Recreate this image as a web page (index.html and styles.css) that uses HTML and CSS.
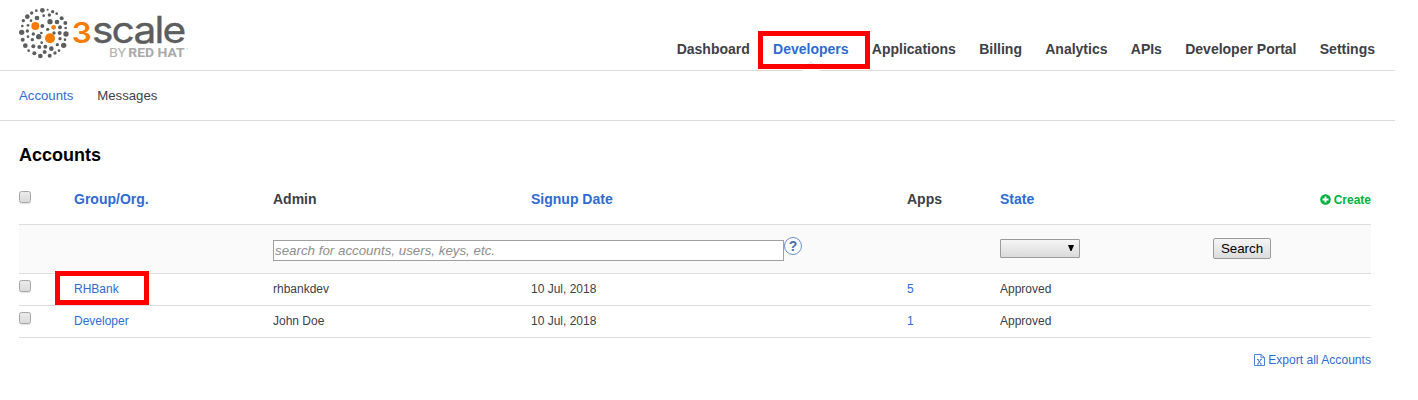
FILE: index.html
```html
<!DOCTYPE html>
<html lang="en">
<head>
<meta charset="utf-8">
<title>Accounts</title>
<link rel="stylesheet" href="styles.css">
</head>
<body>
<div class="page">
  <header class="header">
    <svg class="logo" viewBox="27 21 510 156" role="img" aria-label="3scale by Red Hat">
      <g class="dots" transform="translate(12 12)">
        <circle cx="85" cy="19" r="7"/><circle cx="67" cy="20" r="4"/><circle cx="101" cy="17" r="3"/><circle cx="116" cy="23" r="5"/><circle cx="128" cy="29" r="4"/><circle cx="53" cy="27" r="5"/><circle cx="40" cy="38" r="7"/><circle cx="69" cy="42" r="7"/><circle cx="89" cy="35" r="4"/><circle cx="106" cy="33" r="5"/><circle cx="143" cy="43" r="6"/><circle cx="108" cy="53" r="8"/><circle cx="129" cy="54" r="7"/><circle cx="154" cy="57" r="6"/><circle cx="51" cy="50" r="4"/><circle cx="28" cy="50" r="5"/><circle cx="85" cy="66" r="6"/><circle cx="42" cy="64" r="4"/><circle cx="25" cy="66" r="4"/><circle cx="101" cy="76" r="5"/><circle cx="138" cy="70" r="6"/><circle cx="155" cy="72" r="4"/><circle cx="23" cy="85" r="8"/><circle cx="40" cy="81" r="5"/><circle cx="58" cy="90" r="5"/><circle cx="82" cy="87" r="4"/><circle cx="120" cy="87" r="5"/><circle cx="137" cy="87" r="6"/><circle cx="156" cy="90" r="8"/><circle cx="42" cy="98" r="4"/><circle cx="74" cy="98" r="8"/><circle cx="55" cy="107" r="5"/><circle cx="26" cy="107" r="6"/><circle cx="138" cy="104" r="5"/><circle cx="153" cy="107" r="4"/><circle cx="34" cy="125" r="7"/><circle cx="83" cy="116" r="4"/><circle cx="58" cy="127" r="6"/><circle cx="76" cy="129" r="6"/><circle cx="94" cy="128" r="6"/><circle cx="130" cy="122" r="5"/><circle cx="149" cy="124" r="8"/><circle cx="112" cy="134" r="7"/><circle cx="44" cy="140" r="4"/><circle cx="61" cy="148" r="6"/><circle cx="92" cy="144" r="6"/><circle cx="123" cy="147" r="5"/><circle cx="135" cy="140" r="4"/><circle cx="79" cy="156" r="7"/><circle cx="107" cy="155" r="6"/>
        <g class="orange"><circle cx="64" cy="66" r="12"/><circle cx="119" cy="70" r="7"/><circle cx="108" cy="103" r="15"/></g>
      </g>
      <text class="orange three" x="185" y="129" textLength="60" lengthAdjust="spacingAndGlyphs">3</text>
      <text class="scale" transform="translate(246 128) scale(1.11 1)">scale</text>
      <text class="by" x="297" y="172" textLength="51" lengthAdjust="spacingAndGlyphs">BY</text>
      <text class="by strong" x="355" y="172" textLength="169" lengthAdjust="spacingAndGlyphs">RED HAT</text>
      <circle class="mark" cx="531" cy="147" r="2"/>
    </svg>
    <nav class="nav">
      <a>Dashboard</a>
      <a class="active">Developers<svg class="notch" viewBox="0 0 18 10"><path class="notch-fill" d="M0 10V9L9 1l9 8v1z"/><path class="notch-line" d="M.5 8.800L9 1l8.500 7.800"/></svg><span class="highlight highlight-nav"></span></a>
      <a>Applications</a>
      <a>Billing</a>
      <a>Analytics</a>
      <a>APIs</a>
      <a>Developer Portal</a>
      <a>Settings</a>
    </nav>
  </header>
  <nav class="subnav"><a class="link">Accounts</a><a>Messages</a></nav>
  <main class="main">
    <h1>Accounts</h1>
    <div class="table">
      <div class="row head">
        <span class="check"></span>
        <span class="link">Group/Org.</span>
        <span>Admin</span>
        <span class="link">Signup Date</span>
        <span>Apps</span>
        <span class="link">State</span>
        <a class="create"><svg viewBox="0 0 11 11"><circle cx="5.500" cy="5.500" r="5.300" fill="#00b140"/><path d="M5.500 2.500v6M2.500 5.500h6" stroke="#fff" stroke-width="1.900"/></svg>Create</a>
      </div>
      <div class="row filter">
        <div class="search"><input class="query" type="text" placeholder="search for accounts, users, keys, etc."><span class="help">?</span></div>
        <div class="select"><svg viewBox="0 0 6 6"><path d="M0 0h6L3.500 6h-1z"/></svg></div>
        <button class="button">Search</button>
      </div>
      <div class="row item">
        <span class="check"></span>
        <span class="link org">RHBank<span class="highlight highlight-org"></span></span>
        <span>rhbankdev</span>
        <span>10 Jul, 2018</span>
        <span class="link">5</span>
        <span>Approved</span>
      </div>
      <div class="row item">
        <span class="check"></span>
        <span class="link org">Developer</span>
        <span>John Doe</span>
        <span>10 Jul, 2018</span>
        <span class="link">1</span>
        <span>Approved</span>
      </div>
    </div>
    <a class="export link"><svg viewBox="0 0 11 12"><path d="M.5.500h6.500l3.500 3v8H.5zM7 .500v3.200h3.200" fill="none" stroke="#4c82d6"/><path d="M3.700 5.500l3.400 4.500M7.100 5.500l-3.400 4.500M3 5.500h1.700M6.200 5.500h1.600M3 10h1.700M6.200 10h1.600" fill="none" stroke="#2e6bd0" stroke-width=".9"/></svg>Export all Accounts</a>
  </main>
</div>
</body>
</html>
```

FILE: styles.css
```css
* { box-sizing: border-box; }
body {
  margin: 0;
  background: #fff;
  color: #3e4047;
  font: 12px/16px "Liberation Sans", Arial, sans-serif;
}
.page { width: 1395px; height: 400px; }
.link { color: #2e6bd3; }

.header {
  display: flex;
  justify-content: space-between;
  height: 71px;
  padding: 7px 20px 0 19px;
  border-bottom: 1px solid #dcdcdc;
}
.logo { width: 170px; height: 52px; }
.dots { fill: #5c5d5f; }
.orange { fill: #f57c00; }
.three { font: 600 87px Inter, sans-serif; }
.scale { font: 400 110px Inter, sans-serif; letter-spacing: -5px; fill: #5c5d5f; stroke: #5c5d5f; stroke-width: 1; }
.by { font: 400 36px Roboto, sans-serif; fill: #b3b3b3; }
.by.strong { font-weight: 700; fill: #a9a9a9; }
.mark { fill: #c8c8c8; }
.nav {
  display: flex;
  gap: 23.3px;
  padding-top: 34px;
  font-size: 14px;
  font-weight: bold;
}
.nav a { position: relative; }
.nav .active { color: #2e6bd3; }
.notch {
  position: absolute;
  left: 29px;
  top: 20px;
  width: 18px;
  height: 10px;
}
.notch-fill { fill: #fff; }
.notch-line { fill: none; stroke: #dcdcdc; }
.highlight { position: absolute; border: 5px solid #f00; }
.highlight-nav { left: -15px; top: -10px; width: 112px; height: 38px; }
.highlight-org { left: -19px; top: -9px; width: 94px; height: 34px; }

.subnav {
  display: flex;
  gap: 24px;
  height: 50px;
  padding: 17px 19px 0;
  border-bottom: 1px solid #dcdcdc;
  font-size: 13.2px;
}

.main { padding: 23px 24px 0 19px; }
h1 { margin: 0; color: #000; font-size: 18px; line-height: 22px; }
.row {
  display: grid;
  grid-template-columns: 55px 199px 258px 376px 93px 213px 1fr;
  border-bottom: 1px solid #dcdcdc;
}
.head {
  height: 59px;
  padding-top: 25px;
  font-size: 14px;
  font-weight: bold;
}
.check {
  width: 12px;
  height: 12px;
  border: 1px solid #a6a6a6;
  border-radius: 2.5px;
  background: linear-gradient(#eaeaea, #dadada);
  box-shadow: 0 1px 1px #e2e2e2;
}
.create {
  display: flex;
  justify-content: flex-end;
  gap: 3px;
  padding-top: 1px;
  color: #00b140;
  font-size: 12px;
}
.create svg { width: 11px; height: 11px; margin-top: 2px; }

.filter { height: 49px; background: #fafafa; }
.search { grid-column: 3 / 5; display: flex; align-items: flex-start; }
.query {
  width: 511px;
  height: 21px;
  margin: 15px 0 0;
  padding: 0 1px 1px;
  border: 1px solid #a0a0a0;
  background: #fff;
  font: italic 13.33px "Liberation Sans", Arial, sans-serif;
}
.query::placeholder { color: #8e8e8e; opacity: 1; }
.help {
  width: 18px;
  height: 18px;
  margin-top: 12px;
  border: 1px solid #668fca;
  border-radius: 50%;
  background: #fff;
  color: #4a6cb4;
  font: bold 14px/17px "Liberation Sans", Arial, sans-serif;
  text-align: center;
}
.select {
  grid-column: 6;
  display: flex;
  justify-content: flex-end;
  width: 80px;
  height: 19px;
  margin-top: 14px;
  padding: 5px 5px 0;
  border: 1px solid #9b9b9b;
  border-radius: 1px;
  background: linear-gradient(#f5f5f5, #dadada);
}
.select svg { width: 6px; height: 6px; }
.button {
  width: 58px;
  height: 21px;
  margin-top: 13px;
  padding: 0;
  border: 1px solid #9b9b9b;
  border-radius: 2px;
  background: linear-gradient(#f5f5f5, #dcdcdc);
  color: #000;
  font: 13.33px "Liberation Sans", Arial, sans-serif;
}
.item { height: 32px; padding-top: 6px; }
.item > :not(.check) { padding-top: 1px; }
.org { position: relative; }
.export {
  display: flex;
  justify-content: flex-end;
  gap: 3px;
  margin-top: 14px;
  font-size: 12.1px;
}
.export svg { width: 11px; height: 12px; margin-top: 2px; }
```
